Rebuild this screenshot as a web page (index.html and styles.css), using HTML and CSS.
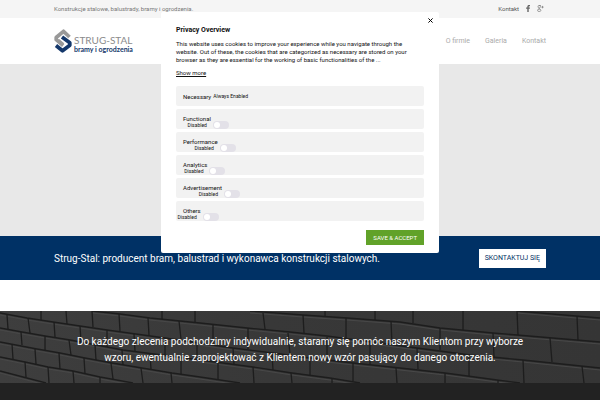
FILE: index.html
```html
<!DOCTYPE html>
<html lang="pl">
<head>
  <meta charset="utf-8">
  <title>Strug-Stal</title>
  <link rel="stylesheet" href="styles.css">
</head>
<body>
  <div class="topbar container">
    <span>Konstrukcje stalowe, balustrady, bramy i ogrodzenia.</span>
    <div class="topbar-links">
      <a href="#">Kontakt</a>
      <a href="#" class="social" aria-label="Facebook">
        <svg width="4" height="7" viewBox="0 0 4 7"><path d="M4 .1v1.1H3.3c-.4 0-.6.2-.6.6v.8H4L3.8 3.800H2.700V7H1.300V3.800H.1V2.600h1.200v-.9C1.300.6 2 0 3 0z"/></svg>
      </a>
      <a href="#" class="social" aria-label="Google+">
        <svg width="7" height="7" viewBox="0 0 7 7"><g fill="none" stroke="#777" stroke-width=".7"><ellipse cx="2.200" cy="1.700" rx="1.200" ry="1.300"/><path d="M2 .4h2M2.600 3c-.7.500-.2.800.3 1.200"/><ellipse cx="2.200" cy="5.300" rx="1.700" ry="1.200"/><path d="M5.500.9v2.400M4.300 2.100h2.400"/></g></svg>
      </a>
    </div>
  </div>

  <header class="header container">
    <a href="#" class="logo">
      <svg class="logo-mark" width="18" height="24" viewBox="0 0 18 24">
        <path d="M15.500 8 9.500 2.300 2.200 8.500v2.200l7 5.800" fill="none" stroke="#999" stroke-width="3.700" stroke-linejoin="round"/>
        <path d="m8 8 7.800 5.800v2.400L8.500 21.800 2 16.500" fill="none" stroke="#14386b" stroke-width="3.700" stroke-linejoin="round"/>
        <path d="m4.500 10.800 5 4.200" stroke="#999" stroke-width="2"/>
      </svg>
      <span class="logo-text">
        <span class="logo-name">STRUG-STAL</span>
        <span class="logo-sub">bramy i ogrodzenia</span>
      </span>
    </a>
    <nav class="nav">
      <a href="#">O firmie</a>
      <a href="#">Galeria</a>
      <a href="#">Kontakt</a>
    </nav>
  </header>

  <div class="hero"></div>

  <section class="cta container">
    <h2>Strug-Stal: producent bram, balustrad i wykonawca konstrukcji stalowych.</h2>
    <a href="#" class="cta-button">SKONTAKTUJ SIĘ</a>
  </section>

  <section class="wall container">
    <svg class="bricks" viewBox="0 0 600 72" preserveAspectRatio="xMidYMid slice" aria-hidden="true">
      <defs>
        <linearGradient id="shade">
          <stop offset="0" stop-color="#3e3e3e"/>
          <stop offset=".45" stop-color="#383838"/>
          <stop offset="1" stop-color="#353535"/>
        </linearGradient>
        <g id="courses">
          <path d="M517 0 600 7"/>
          <path d="M250 0 303 4 347 7 400 11 440 17 493 22 600 31"/>
          <path d="M92 0 120 3 150 7 200 12 247 17 290 21 327 25 417 37 470 44 523 49 600 57"/>
          <path d="M0 2 27 7 53 11 80 15 107 19 165 27 233 37 273 42 310 47 353 52 400 57 445 62 497 69 520 72"/>
          <path d="M0 17 22 21 45 25 70 29 123 39 200 49 253 56 292 62 330 67 360 72"/>
          <path d="M0 31 37 38 60 42 85 47 112 52 142 57 172 62 200 66 240 72"/>
          <path d="M0 46 25 51 48 56 73 60 100 66 133 72"/>
          <path d="M0 60 23 66 46 72"/>
        </g>
      </defs>
      <rect width="600" height="72" fill="url(#shade)"/>
      <use href="#courses" y="2" class="edge"/>
      <g class="mortar">
        <use href="#courses"/>
        <path d="M325 0v5M375 0v9M413 0v12M463 0v19M517 0l1 24M577 5l1 24"/>
        <path d="M162 0v8M195 0v11M263 2l2 16M303 4l1 18M346 7v20M391 10l1 23M440 17v22M493 22l1 24M550 27l2 24"/>
        <path d="M41 0v9M66 0l1 13M92 0l1 16M119 3l1 17M148 7l1 17M179 10l2 18M213 14v19M248 17v21M288 22l2 22M327 26v22M370 31v23M417 37l1 21M469 43v22M523 49l1 23M582 55l2 17"/>
        <path d="M7 4l1 14M28 7l2 15M54 11l1 15M80 15l1 16M107 19v17M134 23l1 17M165 27v17M197 32v16M233 37l1 16M272 42l1 17M310 47v17M353 52v18M396 57l1 15M445 62v10M498 69v3"/>
        <path d="M21 21l1 13M45 25v14M69 29l2 15M95 34l1 15M122 39l1 15M150 43l1 15M181 47v16M218 52v16M253 56l1 16M291 62l1 10M332 68v4"/>
        <path d="M12 33l1 15M35 38l1 15M59 42l1 16M84 47l1 16M111 52l2 16M141 57l2 15M171 62l1 10"/>
        <path d="M25 51l1 15M48 56l1 16M73 60l1 12M100 66v6"/>
      </g>
    </svg>
    <p>Do każdego zlecenia podchodzimy indywidualnie, staramy się pomóc naszym Klientom przy wyborze wzoru, ewentualnie zaprojektować z Klientem nowy wzór pasujący do danego otoczenia.</p>
  </section>

  <footer class="footer"></footer>

  <div class="modal" role="dialog" aria-labelledby="privacy-title">
    <button class="modal-close" aria-label="Close">
      <svg width="5" height="5" viewBox="0 0 5 5"><path d="M.4.4l4.200 4.200M4.600.4.4 4.600" stroke="#000"/></svg>
    </button>
    <h4 id="privacy-title">Privacy Overview</h4>
    <p>This website uses cookies to improve your experience while you navigate through the website. Out of these, the cookies that are categorized as necessary are stored on your browser as they are essential for the working of basic functionalities of the ...</p>
    <a href="#" class="show-more">Show more</a>

    <div class="options">
      <div class="option">
        <span>Necessary</span>
        <span class="always">Always Enabled</span>
      </div>
      <div class="option">
        <label for="functional">Functional<span class="status">Disabled</span></label>
        <input type="checkbox" class="switch" id="functional">
      </div>
      <div class="option">
        <label for="performance">Performance<span class="status">Disabled</span></label>
        <input type="checkbox" class="switch" id="performance">
      </div>
      <div class="option">
        <label for="analytics">Analytics<span class="status">Disabled</span></label>
        <input type="checkbox" class="switch" id="analytics">
      </div>
      <div class="option">
        <label for="advertisement">Advertisement<span class="status">Disabled</span></label>
        <input type="checkbox" class="switch" id="advertisement">
      </div>
      <div class="option">
        <label for="others">Others<span class="status">Disabled</span></label>
        <input type="checkbox" class="switch" id="others">
      </div>
    </div>

    <div class="modal-footer">
      <button class="save">SAVE &amp; ACCEPT</button>
    </div>
  </div>
</body>
</html>
```
FILE: styles.css
```css
* {
  box-sizing: border-box;
}

body {
  margin: 0;
  background-color: #fff;
  font-family: Roboto, sans-serif;
  font-size: 7px;
  overflow: hidden;
}

h2, h4, p {
  margin: 0;
  font-weight: normal;
}

a {
  color: inherit;
  text-decoration: none;
}

svg {
  display: block;
}

.container {
  display: flex;
  align-items: center;
  justify-content: space-between;
  padding: 0 9%;
}

.topbar {
  height: 18px;
  padding-bottom: 2px;
  background-color: #f5f5f5;
  color: #777;
  font-size: 6px;
}

.topbar-links {
  display: flex;
  align-items: center;
  gap: 7px;
  padding-right: 2px;
  color: #555;
}

.social {
  fill: #666;
}

/* header */
.header {
  height: 46px;
}

.logo {
  display: flex;
  align-items: center;
  gap: 2px;
}

.logo-text {
  display: flex;
  flex-direction: column;
  padding-top: 5px;
  font-family: Lato, sans-serif;
}

.logo-name {
  color: #8b8b8b;
  font-size: 10px;
  line-height: 10px;
}

.logo-sub {
  color: #14386b;
  font-size: 7px;
  font-weight: bold;
  line-height: 8px;
}

.nav {
  display: flex;
  gap: 15px;
  color: #aaa;
}

.hero {
  height: 172px;
  background-color: #e8e8e8;
}

.cta {
  height: 44px;
  background-color: #003165;
  color: #fff;
}

.cta h2 {
  font-size: 10px;
}

.cta-button {
  padding: 0 6px;
  background-color: #fff;
  color: #003165;
  line-height: 19px;
}

/* brick wall */
.wall {
  position: relative;
  justify-content: center;
  height: 72px;
  margin-top: 31px;
  padding-top: 5px;
  color: #fff;
  text-align: center;
}

.bricks {
  position: absolute;
  top: 0;
  left: 0;
  width: 100%;
  height: 100%;
}

.edge {
  fill: none;
  stroke: #484848;
}

.mortar {
  fill: none;
  stroke: #1d1d1d;
  stroke-width: 1.3;
}

.wall p {
  position: relative;
  max-width: 470px;
  font-size: 10px;
  line-height: 16px;
}

.footer {
  height: 17px;
  background-color: #222;
}

/* cookie settings */
.modal {
  position: fixed;
  top: 12px;
  left: 50%;
  width: 278px;
  padding: 14px 15px 8px;
  transform: translateX(-50%);
  background-color: #fff;
  border-radius: 2px;
  color: #111;
}

.modal-close {
  position: absolute;
  top: 6px;
  right: 6px;
  padding: 0;
  border: none;
  background: none;
}

.modal h4 {
  margin-bottom: 6px;
  font-weight: bold;
  line-height: 8px;
}

.modal p {
  margin-bottom: 5px;
  font-size: 6px;
  line-height: 8px;
}

.show-more {
  display: block;
  font-size: 6px;
  line-height: 8px;
  text-decoration: underline;
}

.options {
  display: grid;
  gap: 3px;
  margin: 9px 0;
}

.option {
  display: flex;
  align-items: center;
  gap: 2px;
  height: 20px;
  padding: 0 7px;
  background-color: #f2f2f2;
  border-radius: 2px;
  font-size: 6px;
}

.option label {
  position: relative;
  line-height: 8px;
}

.always {
  font-size: 5px;
}

.status {
  position: absolute;
  top: 7px;
  right: 4px;
  font-size: 5px;
  line-height: 6px;
}

.switch {
  position: relative;
  align-self: flex-end;
  width: 16px;
  height: 8px;
  margin: 0;
  appearance: none;
  background-color: #e3e1e8;
  border-radius: 4px;
}

.switch::before {
  content: "";
  position: absolute;
  top: 1px;
  left: 1px;
  width: 6px;
  height: 6px;
  background-color: #fff;
  border-radius: 50%;
}

.switch:checked {
  background-color: #61a229;
}

.switch:checked::before {
  left: 9px;
}

.modal-footer {
  display: flex;
  justify-content: flex-end;
}

.save {
  padding: 0 7px;
  border: none;
  background-color: #61a229;
  color: #fff;
  font-family: inherit;
  font-size: 6px;
  line-height: 15px;
}
```
